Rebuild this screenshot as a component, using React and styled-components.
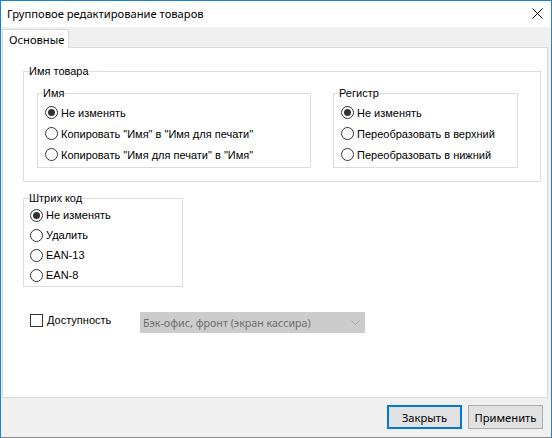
import React from 'react'
import styled, { createGlobalStyle } from 'styled-components'

const GlobalStyle = createGlobalStyle`
  body {
    margin: 0;
    background: #ffffff;
  }
`

const uiFont = `"Noto Sans", "Segoe UI", sans-serif`

const Window = styled.div`
  width: 552px;
  height: 438px;
  box-sizing: border-box;
  border: 1px solid #1883d7;
  border-bottom-color: #8a8a8a;
  display: flex;
  flex-direction: column;
  background: #f0f0f0;
  font-family: "Liberation Sans", Arial, sans-serif;
  font-size: 11px;
  color: #000;
`

const TitleBar = styled.div`
  height: 25px;
  flex: none;
  display: flex;
  align-items: center;
  justify-content: space-between;
  padding: 0 8px 1px 6px;
  background: #ffffff;
  font-family: ${uiFont};
  font-size: 11.2px;
`

const CloseIcon = () =>
  <svg width="11" height="11" viewBox="0 0 11 11">
    <path d="M0.5 0.5 L10.5 10.5 M10.5 0.5 L0.5 10.5" stroke="#000" strokeWidth="1"/>
  </svg>

const TabStrip = styled.div`
  height: 20px;
  flex: none;
  display: flex;
  align-items: flex-end;
  padding-left: 1px;
`

const Tab = styled.div`
  position: relative;
  height: 19px;
  margin-bottom: -1px;
  box-sizing: border-box;
  border: 1px solid #d9d9d9;
  border-bottom: none;
  background: #ffffff;
  padding: 0 4px 0 6px;
  display: flex;
  align-items: center;
  font-family: ${uiFont};
  font-size: 11.2px;
`

const Panel = styled.div`
  flex: 1;
  margin: 0 3px 0 1px;
  border: 1px solid #d9d9d9;
  background: #ffffff;
  padding: 17px 0 0 20px;
  display: flex;
  flex-direction: column;
  align-items: flex-start;
`

const Group = styled.fieldset`
  margin: ${p => p.$top || 0}px 0 0 0;
  padding: 0;
  width: ${p => p.$width}px;
  box-sizing: border-box;
  border: 1px solid #dcdcdc;
  min-width: 0;
`

const Legend = styled.legend`
  margin-left: 5px;
  padding: 0;
  line-height: 13px;
  font-size: 11px;
`

const GroupRow = styled.div`
  display: flex;
  gap: 22px;
  padding: 9px 0 13px 13px;
`

const OptionList = styled.div`
  display: flex;
  flex-direction: column;
  padding: ${p => p.$pad};
`

const Option = styled.label`
  height: ${p => p.$h}px;
  display: flex;
  align-items: center;
  gap: 3px;
  white-space: nowrap;
`

const RadioMark = styled.span`
  width: 13px;
  height: 13px;
  box-sizing: border-box;
  border: 1px solid #333333;
  border-radius: 50%;
  display: flex;
  align-items: center;
  justify-content: center;
  flex: none;

  &::after {
    content: '';
    width: 7px;
    height: 7px;
    border-radius: 50%;
    background: ${p => p.$on ? '#333333' : 'transparent'};
  }
`

const Radio = ({ on, h, children }) =>
  <Option $h={h}>
    <RadioMark $on={on}/>
    {children}
  </Option>

const RadioGroup = ({ title, width, top, pad, h, items }) =>
  <Group $width={width} $top={top}>
    <Legend>{title}</Legend>
    <OptionList $pad={pad}>
      {items.map((text, i) => <Radio key={text} on={i === 0} h={h}>{text}</Radio>)}
    </OptionList>
  </Group>

const AccessRow = styled.div`
  margin: 25px 0 0 7px;
  height: 21px;
  display: flex;
  align-items: center;
`

const CheckLabel = styled.label`
  width: 110px;
  display: flex;
  align-items: center;
  gap: 4px;
  margin-top: -5px;
`

const CheckMark = styled.span`
  width: 13px;
  height: 13px;
  box-sizing: border-box;
  border: 1px solid #333333;
  flex: none;
`

const Combo = styled.div`
  width: 225px;
  height: 21px;
  box-sizing: border-box;
  border: 1px solid #cccccc;
  background: #cccccc;
  color: #6d6d6d;
  display: flex;
  align-items: center;
  justify-content: space-between;
  padding: 0 4px 0 2px;
  font-family: ${uiFont};
  font-size: 10.7px;
`

const Chevron = () =>
  <svg width="9" height="5" viewBox="0 0 9 5">
    <path d="M0.5 0.5 L4.5 4.5 L8.5 0.5" fill="none" stroke="#a8a8a8" strokeWidth="1"/>
  </svg>

const Footer = styled.div`
  height: 39px;
  flex: none;
  box-sizing: border-box;
  padding: 7px 8px 0 0;
  display: flex;
  justify-content: flex-end;
  align-items: flex-start;
  gap: 6px;
`

const Button = styled.button`
  width: 75px;
  height: 24px;
  box-sizing: border-box;
  margin: 0;
  padding: 0;
  background: #e1e1e1;
  border: ${p => p.$default ? '2px solid #0078d7' : '1px solid #adadad'};
  font-family: ${uiFont};
  font-size: 11.2px;
  color: #000;
`

export default function App() {
  return (
    <>
      <GlobalStyle/>
      <Window>
        <TitleBar>
          <span>Групповое редактирование товаров</span>
          <CloseIcon/>
        </TitleBar>
        <TabStrip>
          <Tab>Основные</Tab>
        </TabStrip>
        <Panel>
          <Group $width={518}>
            <Legend>Имя товара</Legend>
            <GroupRow>
              <RadioGroup
                title="Имя"
                width={274}
                pad="2px 0 2px 7px"
                h={21}
                items={['Не изменять', 'Копировать "Имя" в "Имя для печати"', 'Копировать "Имя для печати" в "Имя"']}
              />
              <RadioGroup
                title="Регистр"
                width={185}
                pad="2px 0 2px 7px"
                h={21}
                items={['Не изменять', 'Переобразовать в верхний', 'Переобразовать в нижний']}
              />
            </GroupRow>
          </Group>
          <RadioGroup
            title="Штрих код"
            width={160}
            top={10}
            pad="0 0 1px 6px"
            h={20}
            items={['Не изменять', 'Удалить', 'EAN-13', 'EAN-8']}
          />
          <AccessRow>
            <CheckLabel>
              <CheckMark/>
              Доступность
            </CheckLabel>
            <Combo>
              <span>Бэк-офис, фронт (экран кассира)</span>
              <Chevron/>
            </Combo>
          </AccessRow>
        </Panel>
        <Footer>
          <Button $default>Закрыть</Button>
          <Button>Применить</Button>
        </Footer>
      </Window>
    </>
  )
}
